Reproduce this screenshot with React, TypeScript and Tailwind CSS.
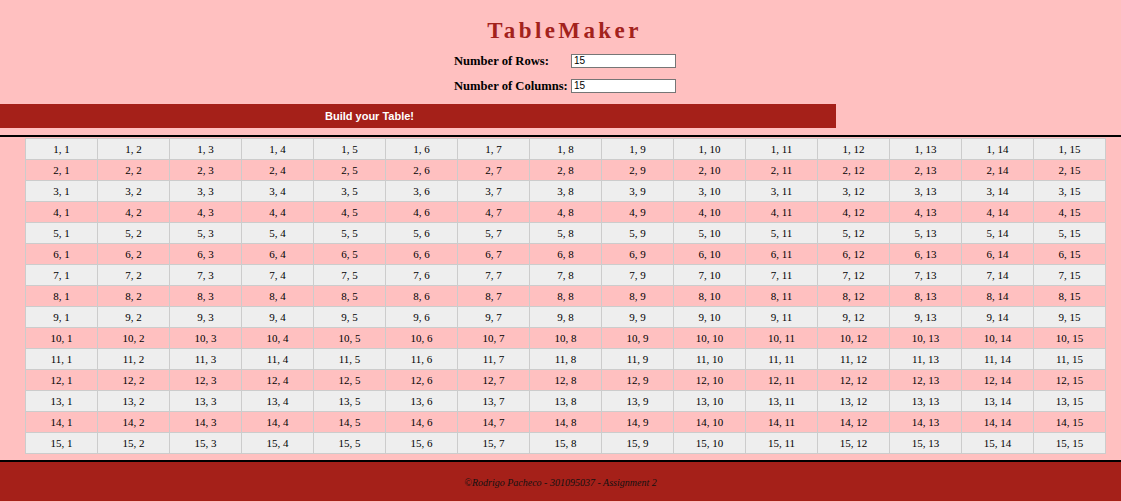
import React from "react";

export default function App() {
  const n = 15;
  const rows = Array.from({ length: n }, (_, i) => i + 1);
  return (
    <div className="min-h-[502px] w-full bg-[#ffc0c0] flex flex-col" style={{ fontFamily: "'Liberation Serif', serif" }}>
      <div className="h-[104px] flex flex-col items-center">
        <h1 className="mt-[18px] h-[26px] text-[23px] leading-[26px] font-bold tracking-[3.4px] text-[#a3221c] pl-[8px]">TableMaker</h1>
        <div className="mt-[10px] pl-[9px] flex flex-col gap-[11px] text-[12.6px] font-bold text-black">
          <div className="flex items-center h-[14px]">
            <span className="w-[117px] shrink-0 whitespace-nowrap">Number of Rows:</span>
            <div className="w-[105px] h-[14px] bg-white border border-[#767676] text-[10px] leading-[12px] pl-[2px] font-normal" style={{ fontFamily: "'Liberation Sans', sans-serif" }}>15</div>
          </div>
          <div className="flex items-center h-[14px]">
            <span className="w-[117px] shrink-0 whitespace-nowrap">Number of Columns:</span>
            <div className="w-[105px] h-[14px] bg-white border border-[#767676] text-[10px] leading-[12px] pl-[2px] font-normal" style={{ fontFamily: "'Liberation Sans', sans-serif" }}>15</div>
          </div>
        </div>
      </div>
      <div className="w-[836px] h-[24px] bg-[#a52019] flex items-center pl-[325px] text-white text-[11px] font-bold" style={{ fontFamily: "'Liberation Sans', sans-serif" }}>
        Build your Table!
      </div>
      <div className="mt-[7px] h-[2px] bg-black w-full" />
      <div className="pl-[25px] pt-[1px]">
        <table className="border-collapse w-[1081px] table-fixed text-[11px] text-black">
          <tbody>
            {rows.map((r) => (
              <tr key={r} className={r % 2 === 1 ? "bg-[#eeeeee]" : "bg-[#ffc0c0]"}>
                {rows.map((c) => (
                  <td key={c} className="h-[21px] border border-[#cccccc] text-center p-0">
                    {r}, {c}
                  </td>
                ))}
              </tr>
            ))}
          </tbody>
        </table>
      </div>
      <div className="mt-[6px] border-t-2 border-black bg-[#a52019] h-[41px] flex items-center justify-center text-[10px] italic text-[#111111] pt-[1px]">
        ©Rodrigo Pacheco - 301095037 - Assignment 2
      </div>
    </div>
  );
}
